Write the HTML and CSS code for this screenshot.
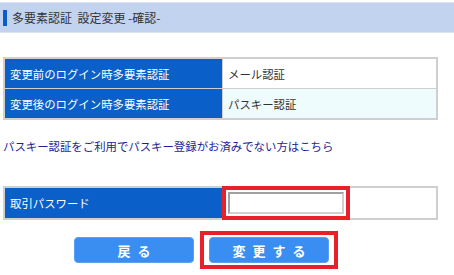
FILE: index.html
```html
<!DOCTYPE html>
<html lang="ja">
<head>
  <meta charset="UTF-8">
  <title>多要素認証 設定変更 -確認-</title>
  <link rel="stylesheet" href="styles.css">
</head>
<body>

  <h1 class="page-title"><span class="title-mark"></span>多要素認証&nbsp;&nbsp;設定変更 -確認-</h1>

  <table class="info-table">
    <tr>
      <th>変更前のログイン時多要素認証</th>
      <td>メール認証</td>
    </tr>
    <tr class="alt">
      <th>変更後のログイン時多要素認証</th>
      <td>パスキー認証</td>
    </tr>
  </table>

  <p class="notice"><a href="#">パスキー認証をご利用でパスキー登録がお済みでない方はこちら</a></p>

  <table class="info-table pass-table">
    <tr>
      <th>取引パスワード</th>
      <td><span class="highlight input-wrap"><input type="password" class="pass-input"></span></td>
    </tr>
  </table>

  <div class="actions">
    <button class="btn">戻る</button>
    <span class="highlight btn-wrap"><button class="btn">変更する</button></span>
  </div>

</body>
</html>
```

FILE: styles.css
```css
body {
  margin: 0;
  font-family: "Noto Sans CJK JP", "Noto Sans", sans-serif;
  font-size: 11.4px;
  color: #333;
  background: #fff;
}

.page-title {
  margin: 2px 0 0;
  height: 29px;
  display: flex;
  align-items: center;
  background: #c2d3f0;
  border-top: 1px solid #dde3ee;
  border-bottom: 1px solid #dde3ee;
  font-size: 12px;
  font-weight: normal;
  color: #333;
}

.title-mark {
  width: 4px;
  height: 16px;
  margin: 0 5px 0 3px;
  background: #0a5cc8;
}

.info-table {
  margin: 24px 0 0 3px;
  width: 435px;
  border-collapse: collapse;
  border: 2px solid #cfcfcf;
}

.info-table th,
.info-table td {
  height: 29px;
  padding: 0 5px;
  text-align: left;
  font-weight: normal;
  border: 1px solid #cfcfcf;
}

.info-table th {
  width: 207px;
  background: #0a60c8;
  color: #fff;
}

.info-table td {
  background: #fff;
  color: #333;
}

.info-table .alt td {
  background: #effcfe;
}

.notice {
  margin: 18px 0 0 3px;
}

.notice a {
  color: #1e1e96;
  text-decoration: none;
}

.pass-table {
  margin-top: 32px;
}

.pass-table td {
  padding: 0;
}

.highlight {
  display: inline-block;
  border: 4px solid #e8202a;
}

.input-wrap {
  margin: -2px 0 -2px -1px;
  padding: 2px;
  vertical-align: middle;
}

.pass-input {
  display: block;
  width: 108px;
  height: 16px;
  margin: 0;
  padding: 1px 2px;
  border: 2px solid #a0a0a0;
  border-right-color: #d0d0d0;
  border-bottom-color: #d0d0d0;
}

.actions {
  display: flex;
  align-items: center;
  gap: 6px;
  margin: 11px 0 0;
  padding-left: 74px;
}

.btn-wrap {
  padding: 2px 5px;
}

.btn {
  display: block;
  width: 120px;
  height: 26px;
  border: 1px solid #5aa0f0;
  border-radius: 4px;
  background: #3a8ef2;
  color: #fff;
  font-family: "Noto Sans CJK JP", sans-serif;
  font-size: 13px;
  font-weight: bold;
  letter-spacing: 7px;
  text-indent: 7px;
  cursor: pointer;
}
```
